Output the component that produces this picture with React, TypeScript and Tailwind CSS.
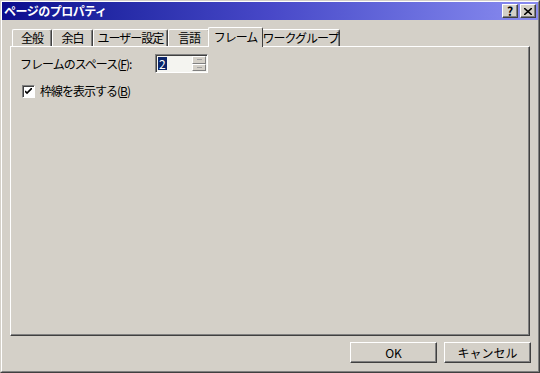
import { useState } from 'react';

const tabs = ['全般', '余白', 'ユーザー設定', '言語', 'フレーム', 'ワークグループ'];
const tabWidths = ['w-[40px]', 'w-[41px]', 'w-[75px]', 'w-[42px]', 'w-[55px]', 'w-[79px]'];

const raised =
  'border border-t-white border-l-white border-r-[#404040] border-b-[#404040] shadow-[inset_-1px_-1px_0_#808080]';

function TitleButton({ children }: { children: React.ReactNode }) {
  return (
    <div
      className={`w-[16px] h-[14px] bg-[#d4d0c8] flex items-center justify-center text-black text-[12px] font-bold leading-none ${raised}`}
    >
      {children}
    </div>
  );
}

function Button({ label }: { label: string }) {
  return (
    <button
      className={`w-[87px] h-[21px] bg-[#d4d0c8] text-[12px] text-black flex items-center justify-center ${raised}`}
    >
      {label}
    </button>
  );
}

export default function App() {
  const [active] = useState(4);
  const [checked, setChecked] = useState(true);

  return (
    <div
      className="w-[540px] h-[373px] bg-[#d4d0c8] border border-t-[#d4d0c8] border-l-[#d4d0c8] border-r-[#404040] border-b-[#404040] overflow-hidden"
      style={{ fontFamily: '"Noto Sans CJK JP", "Liberation Sans", sans-serif' }}
    >
      <div className="h-full flex flex-col border border-t-white border-l-white border-r-[#808080] border-b-[#808080]">
        {/* Title bar */}
        <div className="h-[18px] bg-gradient-to-r from-[#0c0c8e] via-[#4848c8] to-[#8a8cf0] flex items-center pl-[2px] pr-[2px]">
          <span className="text-white text-[12px] font-bold leading-none tracking-[-0.5px]">ページのプロパティ</span>
          <div className="ml-auto flex gap-[2px]">
            <TitleButton>?</TitleButton>
            <TitleButton>
              <svg width="8" height="7" viewBox="0 0 8 7">
                <path d="M0 0 L8 7 M8 0 L0 7" stroke="black" strokeWidth="1.6" />
              </svg>
            </TitleButton>
          </div>
        </div>

        {/* Tabs */}
        <div className="flex items-end h-[26px] pl-[10px]">
          {tabs.map((t, i) => {
            const isActive = i === active;
            return (
              <div
                key={t}
                className={`${tabWidths[i]} shrink-0 whitespace-nowrap flex items-center justify-center text-[12px] text-black leading-none tracking-[-1px] border-t border-l border-r border-t-white border-l-white border-r-[#404040] rounded-t-[2px] ${
                  isActive
                    ? 'h-[20px] -mx-[2px] relative z-10 bg-[#d4d0c8] -mb-[1px] pb-[1px]'
                    : 'h-[17px] bg-[#d4d0c8] shadow-[inset_-1px_0_0_#808080]'
                }`}
              >
                {t}
              </div>
            );
          })}
        </div>

        {/* Panel */}
        <div className="ml-[8px] mr-[8px] h-[290px] border border-t-white border-l-white border-r-[#404040] border-b-[#404040] shadow-[inset_-1px_-1px_0_#808080] px-[9px] pt-[7px]">
          <div className="flex items-center h-[19px]">
            <span className="w-[135px] whitespace-nowrap text-[12px] text-black tracking-[-1px]">
              フレームのスペース(<span className="underline">F</span>):
            </span>
            <div className="w-[53px] h-[19px] bg-[#f4f4f0] border border-t-[#808080] border-l-[#808080] border-r-white border-b-white shadow-[inset_1px_1px_0_#404040] flex items-center pl-[2px] pr-[1px]">
              <span className="bg-[#0a246a] text-white text-[12px] leading-[13px] px-[1px]">2</span>
              <div className="ml-auto flex flex-col w-[14px] h-[15px]">
                <div className="flex-1 bg-[#d4d0c8] border border-t-white border-l-white border-r-[#808080] border-b-[#808080] flex items-center justify-center">
                  <div className="w-[5px] h-[1px] bg-[#a0a0a0]" />
                </div>
                <div className="flex-1 bg-[#d4d0c8] border border-t-white border-l-white border-r-[#808080] border-b-[#808080] flex items-center justify-center">
                  <div className="w-[5px] h-[1px] bg-[#a0a0a0]" />
                </div>
              </div>
            </div>
          </div>

          <label className="flex items-center mt-[9px] ml-[2px] cursor-default">
            <span
              onClick={() => setChecked(!checked)}
              className="w-[13px] h-[13px] bg-white border border-t-[#808080] border-l-[#808080] border-r-white border-b-white shadow-[inset_1px_1px_0_#404040] flex items-center justify-center"
            >
              {checked && (
                <svg width="7" height="7" viewBox="0 0 7 7">
                  <path d="M0 3 L2 5 L7 0" stroke="black" strokeWidth="1.6" fill="none" />
                </svg>
              )}
            </span>
            <span className="ml-[5px] whitespace-nowrap text-[12px] text-black tracking-[-1px]">
              枠線を表示する(<span className="underline">B</span>)
            </span>
          </label>
        </div>

        {/* Buttons */}
        <div className="flex justify-end gap-[7px] mt-[6px] pr-[7px]">
          <Button label="OK" />
          <Button label="キャンセル" />
        </div>
      </div>
    </div>
  );
}
